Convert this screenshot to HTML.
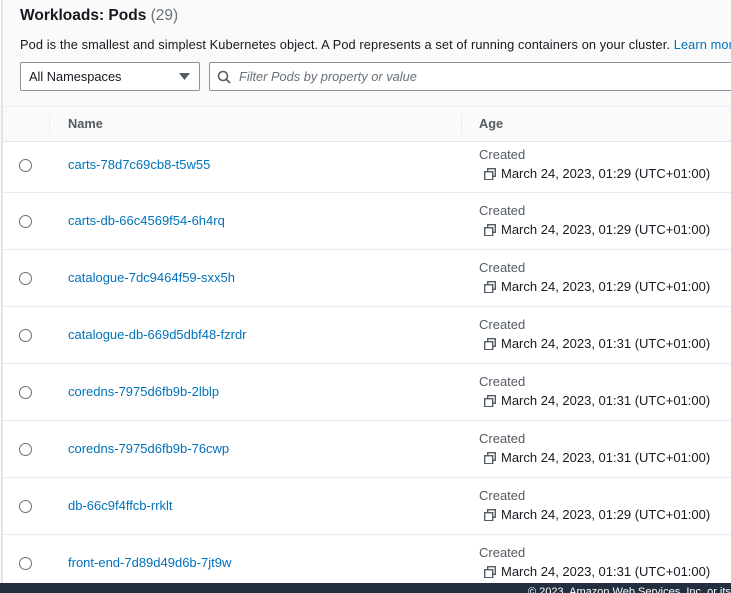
<!DOCTYPE html>
<html><head><style>
*{margin:0;padding:0;box-sizing:border-box}
body{width:731px;height:593px;overflow:hidden;background:#fafafa;font-family:"Liberation Sans",sans-serif;position:relative;color:#16191f}
.a{position:absolute;white-space:nowrap}
.lb{position:absolute;left:1px;top:0;width:2px;height:593px;background:#e4e6e6}
.row{position:absolute;left:3px;width:728px;height:57px;background:#fff;border-bottom:1px solid #eaeded}
.rad{position:absolute;left:19px;width:13px;height:13px;border:1px solid #687078;border-radius:50%;background:#fff}
.lnk{color:#0073bb;font-size:13px}
.cr{color:#545b64;font-size:13px}
.dt{font-size:13px;color:#16191f;left:501px}
.ic{position:absolute;left:484px}
</style></head><body>
<div class="lb"></div>
<div class="a" style="left:20px;top:7px;font-size:15.5px;font-weight:bold">Workloads: Pods <span style="font-weight:normal;color:#687078">(29)</span></div>
<div class="a" style="left:20px;top:37px;font-size:12.8px;letter-spacing:0.1px">Pod is the smallest and simplest Kubernetes object. A Pod represents a set of running containers on your cluster. <span style="color:#0073bb">Learn more</span></div>
<div class="a" style="left:20px;top:62px;width:180px;height:29px;border:1px solid #879596;border-radius:2px;background:#fff;font-size:12.8px;padding:6px 0 0 8px">All Namespaces
<svg style="position:absolute;left:158px;top:10px" width="11" height="8"><path d="M0 0H11L5.5 7Z" fill="#545b64"/></svg></div>
<div class="a" style="left:209px;top:62px;width:530px;height:29px;border:1px solid #879596;border-radius:2px;background:#fff;font-size:12.8px;font-style:italic;color:#687078;padding:6px 0 0 29px">Filter Pods by property or value
<svg style="position:absolute;left:7px;top:7px" width="14" height="14"><circle cx="6" cy="6" r="4.5" fill="none" stroke="#545b64" stroke-width="1.6"/><path d="M9.5 9.5L13 13" stroke="#545b64" stroke-width="1.6"/></svg></div>
<div class="a" style="left:3px;top:106px;width:728px;height:36px;border-top:1px solid #eaeded;border-bottom:1px solid #e0e3e3;box-shadow:0 2px 2px rgba(0,0,0,.06);background:#fafafa"></div>
<div class="a" style="left:49px;top:115px;width:1px;height:18px;background:#eaeded"></div>
<div class="a" style="left:461px;top:115px;width:1px;height:18px;background:#eaeded"></div>
<div class="a" style="left:68px;top:116px;font-size:12.8px;font-weight:bold;color:#545b64">Name</div>
<div class="a" style="left:479px;top:116px;font-size:12.8px;font-weight:bold;color:#545b64">Age</div>

<div class="row" style="top:142px;height:51px"></div>
<div class="row" style="top:193px"></div>
<div class="row" style="top:250px"></div>
<div class="row" style="top:307px"></div>
<div class="row" style="top:364px"></div>
<div class="row" style="top:421px"></div>
<div class="row" style="top:478px"></div>
<div class="row" style="top:535px"></div>

<div class="rad" style="top:159px"></div><div class="a lnk" style="left:68px;top:157px">carts-78d7c69cb8-t5w55</div>
<div class="rad" style="top:215px"></div><div class="a lnk" style="left:68px;top:213px">carts-db-66c4569f54-6h4rq</div>
<div class="rad" style="top:272px"></div><div class="a lnk" style="left:68px;top:270px">catalogue-7dc9464f59-sxx5h</div>
<div class="rad" style="top:329px"></div><div class="a lnk" style="left:68px;top:327px">catalogue-db-669d5dbf48-fzrdr</div>
<div class="rad" style="top:386px"></div><div class="a lnk" style="left:68px;top:384px">coredns-7975d6fb9b-2lblp</div>
<div class="rad" style="top:443px"></div><div class="a lnk" style="left:68px;top:441px">coredns-7975d6fb9b-76cwp</div>
<div class="rad" style="top:500px"></div><div class="a lnk" style="left:68px;top:498px">db-66c9f4ffcb-rrklt</div>
<div class="rad" style="top:557px"></div><div class="a lnk" style="left:68px;top:555px">front-end-7d89d49d6b-7jt9w</div>

<svg width="0" height="0" style="position:absolute"><defs><g id="cp"><rect x="0.7" y="3.7" width="8" height="8" fill="none" stroke="#545b64" stroke-width="1.4"/><path d="M3.7 3.5V0.7H11.3V8.3H8.8" fill="none" stroke="#545b64" stroke-width="1.4"/></g></defs></svg>

<div class="a cr" style="left:479px;top:147px">Created</div><svg class="ic" style="top:168px" width="12" height="12"><use href="#cp"/></svg><div class="a dt" style="top:166px">March 24, 2023, 01:29 (UTC+01:00)</div>
<div class="a cr" style="left:479px;top:203px">Created</div><svg class="ic" style="top:224px" width="12" height="12"><use href="#cp"/></svg><div class="a dt" style="top:222px">March 24, 2023, 01:29 (UTC+01:00)</div>
<div class="a cr" style="left:479px;top:260px">Created</div><svg class="ic" style="top:281px" width="12" height="12"><use href="#cp"/></svg><div class="a dt" style="top:279px">March 24, 2023, 01:29 (UTC+01:00)</div>
<div class="a cr" style="left:479px;top:317px">Created</div><svg class="ic" style="top:338px" width="12" height="12"><use href="#cp"/></svg><div class="a dt" style="top:336px">March 24, 2023, 01:31 (UTC+01:00)</div>
<div class="a cr" style="left:479px;top:374px">Created</div><svg class="ic" style="top:395px" width="12" height="12"><use href="#cp"/></svg><div class="a dt" style="top:393px">March 24, 2023, 01:31 (UTC+01:00)</div>
<div class="a cr" style="left:479px;top:431px">Created</div><svg class="ic" style="top:452px" width="12" height="12"><use href="#cp"/></svg><div class="a dt" style="top:450px">March 24, 2023, 01:31 (UTC+01:00)</div>
<div class="a cr" style="left:479px;top:488px">Created</div><svg class="ic" style="top:509px" width="12" height="12"><use href="#cp"/></svg><div class="a dt" style="top:507px">March 24, 2023, 01:29 (UTC+01:00)</div>
<div class="a cr" style="left:479px;top:545px">Created</div><svg class="ic" style="top:566px" width="12" height="12"><use href="#cp"/></svg><div class="a dt" style="top:564px">March 24, 2023, 01:31 (UTC+01:00)</div>

<div class="a" style="left:0;top:583px;width:731px;height:10px;background:#232f3e;color:#fff;font-size:11px;padding-left:528px;line-height:18px;overflow:hidden">© 2023, Amazon Web Services, Inc. or its affiliates.</div>
</body></html>
